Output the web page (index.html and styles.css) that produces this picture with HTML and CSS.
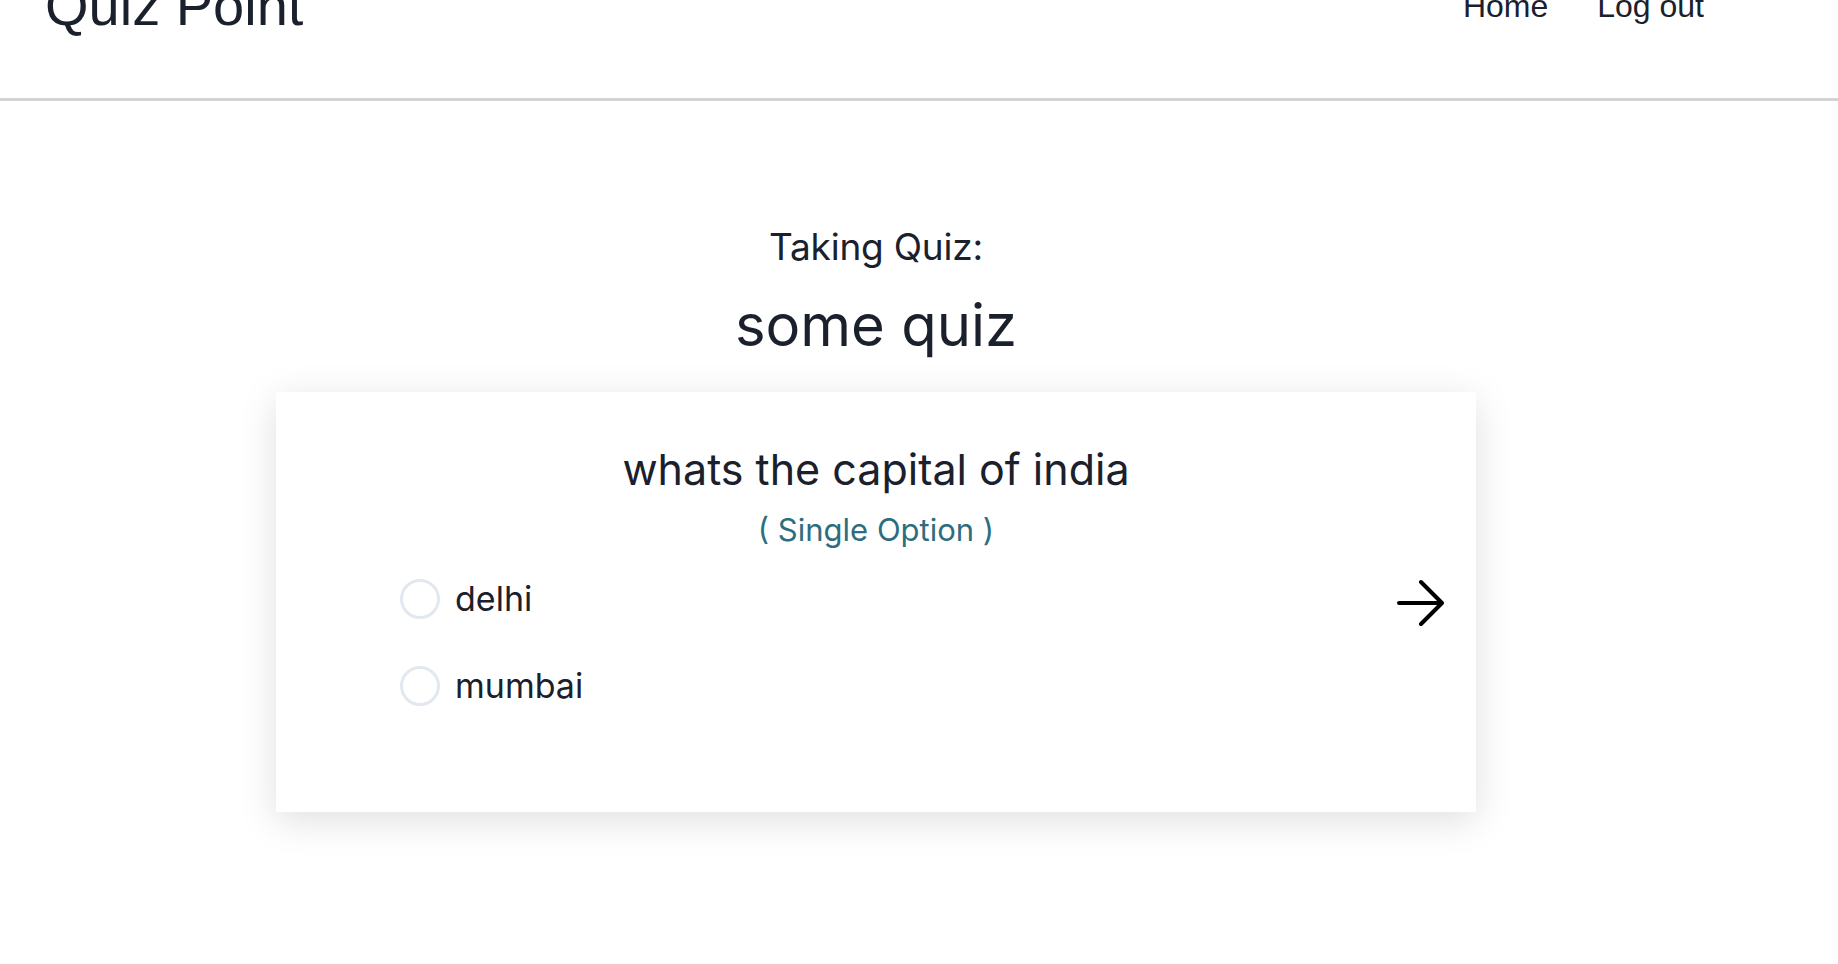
FILE: index.html
```html
<!DOCTYPE html>
<html lang="en">
<head>
<meta charset="utf-8">
<title>Quiz Point</title>
<link rel="stylesheet" href="styles.css">
</head>
<body>
<header class="topbar">
  <div class="brand">Quiz Point</div>
  <nav class="nav">
    <a class="nav-link" href="#">Home</a>
    <a class="nav-link" href="#">Log out</a>
  </nav>
</header>
<main class="main">
  <p class="taking">Taking Quiz:</p>
  <h1 class="quiz-title">some quiz</h1>
  <section class="card">
    <h2 class="question">whats the capital of india</h2>
    <p class="qtype">( Single Option )</p>
    <div class="answer-row">
      <div class="options">
        <label class="option"><span class="radio"></span><span class="option-text">delhi</span></label>
        <label class="option"><span class="radio"></span><span class="option-text">mumbai</span></label>
      </div>
      <button class="next" aria-label="Next">
        <svg width="48" height="48" viewBox="0 0 48 48" fill="none" stroke="#000" stroke-width="4" stroke-linecap="round" stroke-linejoin="round"><path d="M3 24 H46 M25 3 L46 24 L25 45"/></svg>
      </button>
    </div>
  </section>
</main>
</body>
</html>
```
FILE: styles.css
```css
* { box-sizing: border-box; }
html, body { margin: 0; padding: 0; background: #fff; }
html { overflow: hidden; }
body {
  font-family: Inter, "Noto Sans", sans-serif;
  color: #1a202c;
}
.topbar {
  display: flex;
  align-items: center;
  justify-content: space-between;
  height: 183px;
  margin-top: -82px;
  padding: 0 134px 0 45px;
  border-bottom: 3px solid #d3d3d3;
  font-family: "Liberation Sans", Arial, sans-serif;
}
.brand {
  font-size: 56px;
  line-height: 64px;
  margin-top: -4px;
}
.nav { display: flex; gap: 49px; margin-top: -4px; }
.nav-link {
  font-size: 32px;
  line-height: 37px;
  color: #1a202c;
  text-decoration: none;
}
.main {
  display: flex;
  flex-direction: column;
  align-items: center;
  padding: 124px 86px 120px 0;
}
.taking {
  margin: 0;
  font-size: 37px;
  line-height: 1.2;
  letter-spacing: -0.2px;
}
.quiz-title {
  margin: 22px 0 0;
  font-size: 58px;
  font-weight: 400;
  line-height: 1.2;
}
.card {
  width: 1200px;
  min-height: 420px;
  margin-top: 31px;
  padding: 52px 32px 60px;
  background: #fff;
  box-shadow: 0 8px 36px rgba(0, 0, 0, 0.13);
  display: flex;
  flex-direction: column;
  align-items: center;
}
.question {
  margin: 0;
  font-size: 43px;
  font-weight: 400;
  line-height: 1.2;
}
.qtype {
  margin: 15px 0 0;
  font-size: 31px;
  line-height: 1.2;
  color: #2c6e80;
}
.answer-row {
  align-self: stretch;
  display: flex;
  align-items: flex-start;
  margin-top: 31px;
  padding-left: 92px;
}
.options {
  flex: 1;
  display: flex;
  flex-direction: column;
  gap: 46px;
}
.option {
  display: flex;
  align-items: center;
  gap: 15px;
  font-size: 34px;
  line-height: 1.2;
}
.radio {
  width: 40px;
  height: 40px;
  border: 3px solid #e2e8f0;
  border-radius: 50%;
  flex: none;
}
.next {
  border: 0;
  background: none;
  padding: 0;
  margin-top: 0;
  width: 48px;
  height: 48px;
  cursor: pointer;
}
.next svg { display: block; }
```
